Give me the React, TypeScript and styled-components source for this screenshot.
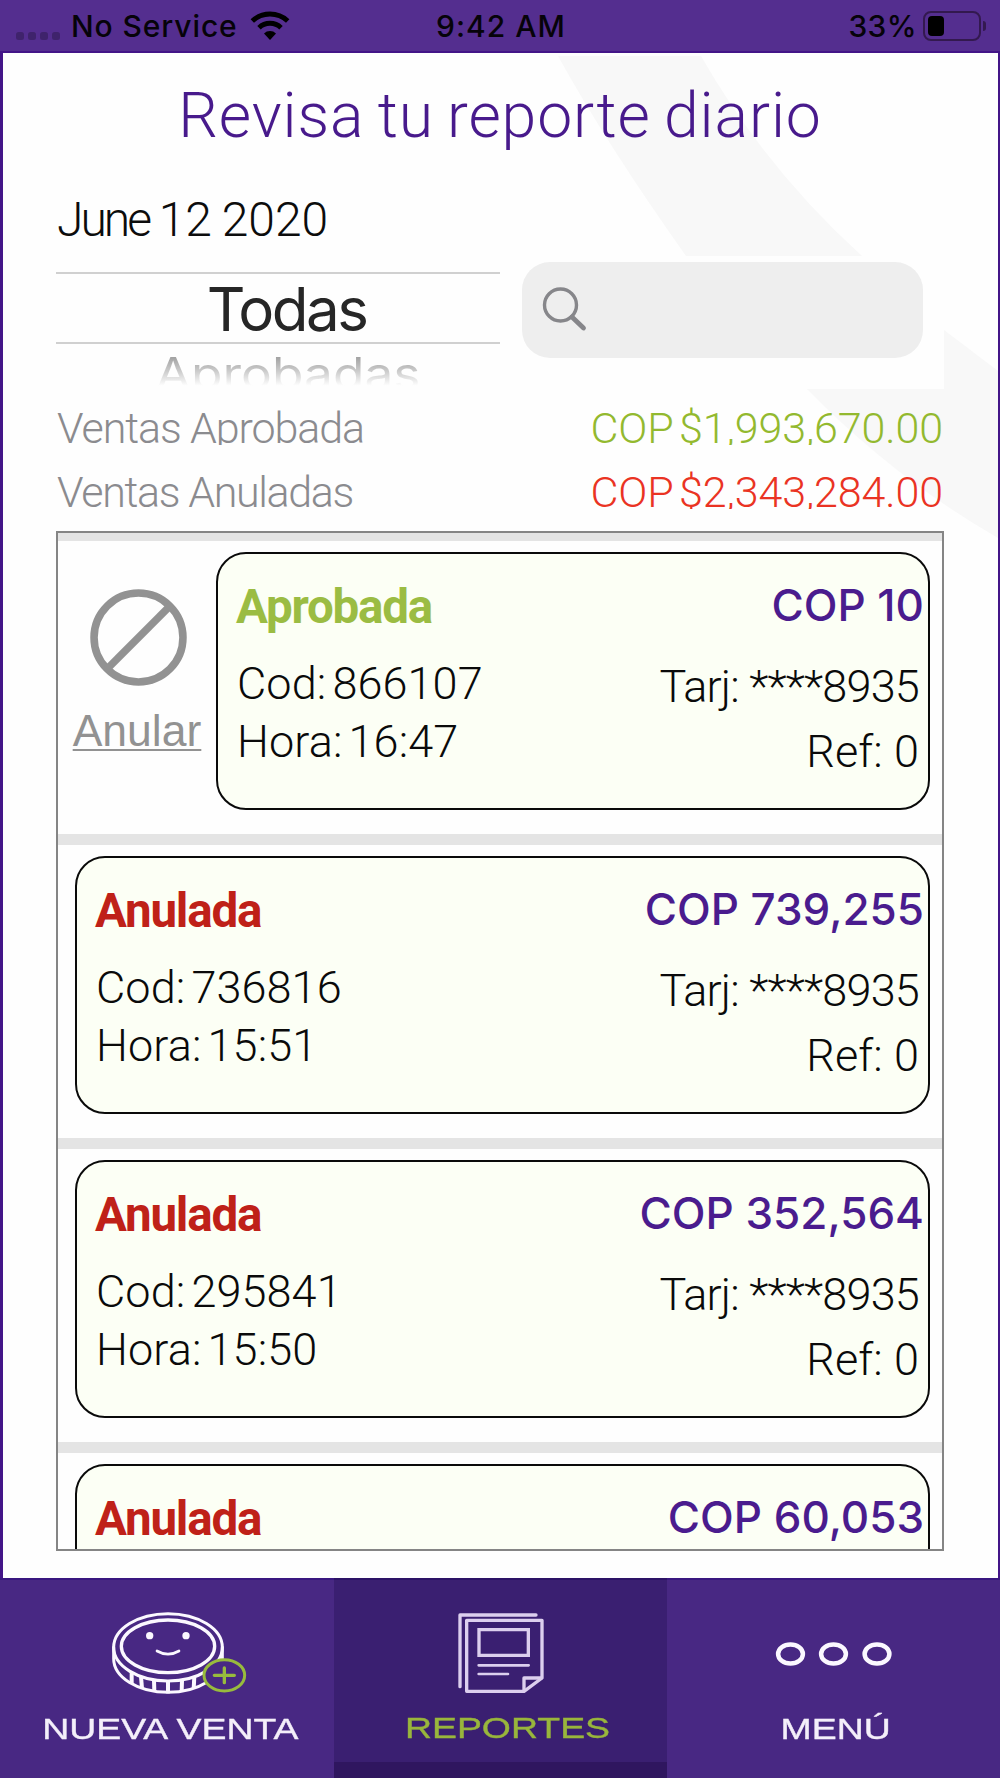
import React from "react";
import styled, { createGlobalStyle } from "styled-components";

const LIGHT = `Roboto, "Open Sans", sans-serif`;
const SYSTEM = `Inter, "Liberation Sans", sans-serif`;
const ARIAL = `"Liberation Sans", Arial, sans-serif`;

const GlobalStyle = createGlobalStyle`
  *, *::before, *::after { box-sizing: border-box; }
  body { margin: 0; background: #fefefe; }
`;

const Screen = styled.div`
  width: 1000px;
  height: 1778px;
  display: flex;
  flex-direction: column;
  overflow: hidden;
  background: #fefefe;
`;

/* ---------- status bar ---------- */

const StatusBar = styled.header`
  height: 53px;
  flex: none;
  display: grid;
  grid-template-columns: 1fr auto 1fr;
  align-items: center;
  padding: 1px 14px 0 16px;
  background: #542e8f;
  border-bottom: 2px solid #431588;
  font: 500 30px/40px ${SYSTEM};
  color: #060309;
`;

const Carrier = styled.div`
  display: flex;
  align-items: center;
  letter-spacing: 0.9px;
`;

const SignalDots = styled.div`
  display: flex;
  gap: 4px;
  margin: 20px 11px 0 0;
  i {
    width: 8px;
    height: 8px;
    border-radius: 2.5px;
    background: rgba(0, 0, 0, 0.24);
  }
`;

const WifiIcon = styled.svg`
  width: 40px;
  height: 30px;
  margin-left: 12px;
`;

const Clock = styled.div`
  letter-spacing: 1px;
`;

const Power = styled.div`
  display: flex;
  justify-content: flex-end;
  align-items: center;
  letter-spacing: 0.4px;
`;

const Battery = styled.div`
  width: 58px;
  height: 30px;
  margin-left: 6px;
  padding: 3px;
  border: 2px solid #33194f;
  border-radius: 8px;
`;

const Charge = styled.div`
  width: 16px;
  height: 20px;
  border-radius: 4px;
  background: #000;
`;

const BatteryTip = styled.div`
  width: 3px;
  height: 10px;
  margin-left: 2px;
  border-radius: 0 3px 3px 0;
  background: #33194f;
`;

/* ---------- page ---------- */

const Page = styled.main`
  position: relative;
  height: 1525px;
  flex: none;
  display: flex;
  flex-direction: column;
  padding: 25px 54px 0 53px;
  border: solid #431588;
  border-width: 0 2px 0 3px;
`;

const Watermark = styled.svg`
  position: absolute;
  left: 0;
  top: 0;
  width: 995px;
  height: 500px;
`;

const Title = styled.h1`
  position: relative;
  margin: 0;
  text-align: center;
  font: 300 62.5px/76px ${LIGHT};
  letter-spacing: 0.9px;
  word-spacing: -3px;
  color: #481a8c;
`;

const DateText = styled.div`
  position: relative;
  margin-top: 37px;
  font: 300 48px/58px ${LIGHT};
  letter-spacing: 0;
  word-spacing: -2px;
  padding-left: 1px;
  color: #0c0c0c;
`;

const Month = styled.span`
  letter-spacing: -3px;
`;

const Filters = styled.div`
  position: relative;
  display: flex;
  align-items: flex-start;
  height: 135px;
  margin-top: 12px;
`;

const Picker = styled.div`
  width: 444px;
  margin-top: 11px;
  text-align: center;
  font-family: ${SYSTEM};
`;

const PickerSelected = styled.div`
  height: 72px;
  padding: 1px 0 0 17px;
  border: solid #d0d0d0;
  border-width: 2px 0;
  font-size: 60px;
  line-height: 68px;
  letter-spacing: -2.5px;
  color: #262626;
`;

const PickerNext = styled.div`
  height: 42px;
  padding-left: 20px;
  overflow: hidden;
  font-size: 51.5px;
  line-height: 55px;
  color: transparent;
  background: linear-gradient(#a0a0a0 20%, #cccccc 60%, #ffffff 100%);
  background-clip: text;
  -webkit-background-clip: text;
  transform: scaleY(0.88);
  transform-origin: 50% 100%;
`;

const SearchBox = styled.label`
  display: flex;
  align-items: center;
  width: 401px;
  height: 96px;
  margin: 0.5px 0 0 21.5px;
  padding-left: 18px;
  border-radius: 28px;
  background: #eeeeee;
`;

const SearchIcon = styled.svg`
  width: 48px;
  height: 48px;
`;

const Total = styled.div`
  position: relative;
  display: flex;
  justify-content: space-between;
  height: 49px;
  margin-bottom: 15px;
  padding: 0 1px;
  overflow: hidden;
  font: 300 43px/65px ${LIGHT};
`;

const TotalLabel = styled.span<{ $tracking: number }>`
  letter-spacing: ${(p) => p.$tracking}px;
  color: #8b8b8f;
`;

const TotalAmount = styled.span<{ $color: string }>`
  letter-spacing: -0.1px;
  word-spacing: -5px;
  color: ${(p) => p.$color};
`;

/* ---------- transaction list ---------- */

const List = styled.section`
  position: relative;
  width: 888px;
  height: 1020px;
  margin-top: 7px;
  border: 2px solid #858585;
  overflow: hidden;
  background: #fefefe;
`;

const Row = styled.article`
  display: flex;
  height: 304px;
  padding: 11px 12px 24px 17px;
  border-top: 11px solid #e4e4e4;
  &:first-child {
    height: 301px;
    border-top-width: 8px;
    padding-left: 14px;
  }
`;

const VoidAction = styled.div`
  display: flex;
  flex-direction: column;
  align-items: center;
  width: 132px;
  margin-right: 12px;
  padding-top: 37px;
`;

const VoidIcon = styled.svg`
  width: 97px;
  height: 97px;
`;

const VoidLabel = styled.span`
  margin: 20px 2px 0 0;
  font: 400 44.5px/50px ${ARIAL};
  color: #929292;
  text-decoration: underline;
  text-decoration-thickness: 2px;
  text-underline-offset: 3px;
  text-decoration-skip-ink: none;
`;

const Card = styled.div`
  flex: 1;
  display: flex;
  justify-content: space-between;
  height: 258px;
  padding: 23px 4px 0 17px;
  border: 2px solid #0a0a0a;
  border-radius: 30px;
  background: #fcfff5;
`;

const Column = styled.div<{ $end?: boolean }>`
  display: flex;
  flex-direction: column;
  align-items: ${(p) => (p.$end ? "flex-end" : "flex-start")};
`;

const Status = styled.span<{ $ok?: boolean }>`
  margin: 2px 0 19.5px 1px;
  font: 700 47.5px/56px ${LIGHT};
  letter-spacing: -1.2px;
  color: ${(p) => (p.$ok ? "#9bbc43" : "#bf2118")};
`;

const Amount = styled.span`
  margin-bottom: 20.5px;
  font: 500 44px/56px ${SYSTEM};
  color: #4a1c8e;
`;

const Detail = styled.span<{ $end?: boolean; $tight?: boolean }>`
  padding: ${(p) => (p.$end ? "0 5px 0 0" : "0 0 0 2px")};
  font: 300 45px/${(p) => (p.$end ? 65.5 : 58.5)}px ${LIGHT};
  letter-spacing: ${(p) => (p.$tight ? -0.8 : 0.1)}px;
  word-spacing: ${(p) => (p.$end ? 0 : -5)}px;
  color: #0a0a0a;
`;

/* ---------- tab bar ---------- */

const TabBar = styled.nav`
  flex: 1;
  display: grid;
  grid-template-columns: 333.5px 333px 1fr;
`;

const Tab = styled.a<{ $active?: boolean }>`
  display: flex;
  flex-direction: column;
  align-items: center;
  padding-top: 20px;
  border-top: 2px solid ${(p) => (p.$active ? "#2c1266" : "#391780")};
  background: ${(p) => (p.$active ? "#3a1f71" : "#482883")};
  box-shadow: ${(p) => (p.$active ? "inset 0 -16px #2f165f" : "none")};
`;

const TabIcon = styled.svg`
  width: 160px;
  height: 110px;
`;

const TabLabel = styled.span<{ $active?: boolean; $shift: number }>`
  margin: ${(p) => (p.$active ? 1 : 2)}px 0 0 ${(p) => p.$shift * 2}px;
  font: 400 29px/34px ${ARIAL};
  color: ${(p) => (p.$active ? "#99b63c" : "#f4effa")};
  -webkit-text-stroke: 0.35px currentColor;
  transform: scaleX(1.29);
`;

type Sale = {
  status: string;
  ok?: boolean;
  amount: string;
  code?: string;
  time?: string;
  card?: string;
  ref?: string;
};

const sales: Sale[] = [
  { status: "Aprobada", ok: true, amount: "COP 10", code: "866107", time: "16:47", card: "****8935", ref: "0" },
  { status: "Anulada", amount: "COP 739,255", code: "736816", time: "15:51", card: "****8935", ref: "0" },
  { status: "Anulada", amount: "COP 352,564", code: "295841", time: "15:50", card: "****8935", ref: "0" },
  { status: "Anulada", amount: "COP 60,053" },
];

function SaleRow({ sale }: { sale: Sale }) {
  return (
    <Row>
      {sale.ok && (
        <VoidAction>
          <VoidIcon viewBox="0 0 96 96" fill="none" stroke="#929292" strokeWidth="7.5">
            <circle cx="48" cy="48" r="44" />
            <path d="M17 79 79 17" />
          </VoidIcon>
          <VoidLabel>Anular</VoidLabel>
        </VoidAction>
      )}
      <Card>
        <Column>
          <Status $ok={sale.ok}>{sale.status}</Status>
          {sale.code && <Detail>Cod: {sale.code}</Detail>}
          {sale.time && <Detail>Hora: {sale.time}</Detail>}
        </Column>
        <Column $end>
          <Amount>{sale.amount}</Amount>
          {sale.card && <Detail $end $tight>Tarj: {sale.card}</Detail>}
          {sale.ref && <Detail $end>Ref: {sale.ref}</Detail>}
        </Column>
      </Card>
    </Row>
  );
}

function CoinIcon() {
  const ticks = [
    [95, 216, 95, 250],
    [123, 230, 126, 266],
    [162, 241, 163, 275],
    [204, 245, 204, 280],
    [246, 241, 245, 275],
    [283, 230, 281, 266],
  ];
  return (
    <TabIcon viewBox="-39 0 480 330" fill="none" stroke="#fbf8ff" strokeWidth="9" strokeLinecap="round">
      <ellipse cx="204" cy="142" rx="163" ry="101" />
      <ellipse cx="204" cy="139" rx="140" ry="79" strokeWidth="10" />
      <path d="M41 142v34a163 101 0 0 0 326 0v-34" />
      {ticks.map(([a, b, c, d]) => (
        <path key={a} d={`M${a} ${b}L${c} ${d}`} strokeWidth="12" strokeLinecap="butt" />
      ))}
      <path d="M171 153q33 19 66 0" strokeWidth="8" />
      <circle cx="149" cy="107" r="11" fill="#fbf8ff" stroke="none" />
      <circle cx="258" cy="107" r="11" fill="#fbf8ff" stroke="none" />
      <ellipse cx="373" cy="226" rx="61" ry="47" fill="#482883" stroke="#98bb3d" />
      <path d="M343 226h60M373 204v44" stroke="#98bb3d" strokeWidth="10" />
    </TabIcon>
  );
}

function ReportIcon() {
  return (
    <TabIcon viewBox="-60 30 480 330" fill="none" stroke="#dccfee" strokeWidth="10" strokeLinecap="round" strokeLinejoin="round">
      <path d="M60 290V75h228" />
      <path d="M80 91h226v173l-54 40H80Z" />
      <path d="M252 302v-38h52" />
      <path d="M117 119h148v77H117Z" strokeLinejoin="miter" />
      <path d="M116 226h150M116 252h88" strokeWidth="8" />
    </TabIcon>
  );
}

function MoreIcon() {
  return (
    <TabIcon viewBox="0 0 160 110" fill="none" stroke="#fbf8ff" strokeWidth="4.5">
      {[37.5, 80.5, 124].map((x) => (
        <ellipse key={x} cx={x} cy="54" rx="12.4" ry="9.6" />
      ))}
    </TabIcon>
  );
}

export default function App() {
  return (
    <Screen>
      <GlobalStyle />
      <StatusBar>
        <Carrier>
          <SignalDots>
            <i />
            <i />
            <i />
            <i />
          </SignalDots>
          No Service
          <WifiIcon viewBox="0 0 40 30" fill="none" stroke="#000" strokeWidth="5">
            <path d="M2.3 10A26 26 0 0 1 37.7 10" />
            <path d="M9 16.7A16 16 0 0 1 31 16.7" />
            <path d="M14 22.6A8.5 8.5 0 0 1 26 22.6L20 29Z" fill="#000" stroke="none" />
          </WifiIcon>
        </Carrier>
        <Clock>9:42 AM</Clock>
        <Power>
          33%
          <Battery>
            <Charge />
          </Battery>
          <BatteryTip />
        </Power>
      </StatusBar>

      <Page>
        <Watermark viewBox="3 53 995 500" fill="#f8f8f8">
          <path d="M558 56H701Q765 168 862 256H686Q606 143 558 56Z" />
          <path d="M807 389H944V330L998 371V538Q894 478 807 389Z" />
        </Watermark>
        <Title>Revisa tu reporte diario</Title>
        <DateText>
          <Month>June</Month> 12 2020
        </DateText>
        <Filters>
          <Picker>
            <PickerSelected>Todas</PickerSelected>
            <PickerNext>Aprobadas</PickerNext>
          </Picker>
          <SearchBox>
            <SearchIcon viewBox="0 0 48 48" fill="none" stroke="#86868a" strokeLinecap="round">
              <circle cx="20.5" cy="19" r="16" strokeWidth="3.4" />
              <path d="M32 31 43.5 42" strokeWidth="4.8" />
            </SearchIcon>
          </SearchBox>
        </Filters>
        <Total>
          <TotalLabel $tracking={-1.1}>Ventas Aprobada</TotalLabel>
          <TotalAmount $color="#93b92f">COP $1,993,670.00</TotalAmount>
        </Total>
        <Total>
          <TotalLabel $tracking={-1.35}>Ventas Anuladas</TotalLabel>
          <TotalAmount $color="#ea3323">COP $2,343,284.00</TotalAmount>
        </Total>
        <List>
          {sales.map((sale) => (
            <SaleRow key={sale.amount} sale={sale} />
          ))}
        </List>
      </Page>

      <TabBar>
        <Tab>
          <CoinIcon />
          <TabLabel $shift={4}>NUEVA VENTA</TabLabel>
        </Tab>
        <Tab $active>
          <ReportIcon />
          <TabLabel $active $shift={8}>REPORTES</TabLabel>
        </Tab>
        <Tab>
          <MoreIcon />
          <TabLabel $shift={2}>MENÚ</TabLabel>
        </Tab>
      </TabBar>
    </Screen>
  );
}
